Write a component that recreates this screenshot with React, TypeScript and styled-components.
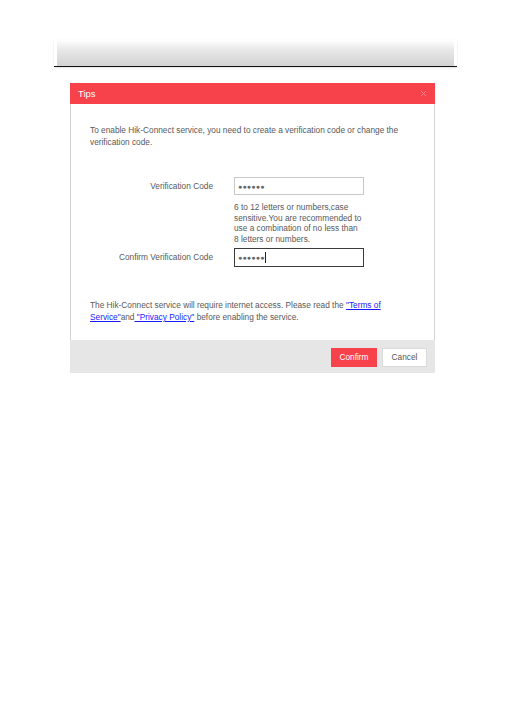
import styled, { createGlobalStyle } from "styled-components";
import { X } from "lucide-react";

const GlobalStyle = createGlobalStyle`
  body {
    margin: 0;
    background: #fff;
    font-family: "Liberation Sans", Arial, sans-serif;
  }
`;

const Page = styled.div`
  width: 511px;
  min-height: 721px;
  padding-top: 40px;
  box-sizing: border-box;
`;

const HeaderRule = styled.div`
  margin-left: 54px;
  width: 403px;
  border-bottom: 1px solid #111;
  box-shadow: 0 1px 2px rgba(0, 0, 0, 0.12);
`;

const HeaderBand = styled.div`
  margin: 0 3px;
  height: 26px;
  background: linear-gradient(#ffffff, #e9e9e9 35%, #d2d2d2);
`;

const Dialog = styled.div`
  margin: 16px 0 0 70px;
  width: 365px;
`;

const TitleBar = styled.div`
  height: 21px;
  background: #f7414b;
  display: flex;
  align-items: center;
  justify-content: space-between;
  padding: 0 7px 0 8px;
  color: #fff;
  font-size: 9.5px;
`;

const Close = styled.span`
  display: flex;
  color: #fbb3b7;
`;

const Body = styled.div`
  border-left: 1px solid #d4d4d4;
  border-right: 1px solid #d4d4d4;
  padding: 20px 19px 17px 19px;
  color: #585858;
  font-size: 8.3px;
  line-height: 12px;
`;

const Intro = styled.p`
  margin: 0;
`;

const Form = styled.div`
  margin-top: 29px;
  display: flex;
  flex-direction: column;
  gap: 3px;
`;

const Row = styled.div`
  display: flex;
  gap: 21px;
  align-items: flex-start;
`;

const Label = styled.div`
  width: 123px;
  text-align: right;
  line-height: 18px;
`;

const FieldCol = styled.div`
  width: 130px;
`;

const Field = styled.div<{ $focused?: boolean }>`
  height: ${(p) => (p.$focused ? 19 : 18)}px;
  box-sizing: border-box;
  border: 1px solid ${(p) => (p.$focused ? "#3a3a3a" : "#c9c9c9")};
  display: flex;
  align-items: center;
  padding-left: 3px;
  background: #fff;
`;

const Dots = styled.span`
  font-size: 7px;
  letter-spacing: 0.2px;
  color: #666;
  line-height: 1;
`;

const Caret = styled.span`
  width: 1px;
  height: 11px;
  background: #222;
`;

const Hint = styled.div`
  margin-top: 7px;
  line-height: 10.7px;
`;

const Notice = styled.p`
  margin: 32px 0 0;
`;

const Link = styled.a`
  color: #1a1aff;
  text-decoration: underline;
`;

const Footer = styled.div`
  height: 33px;
  background: #e6e6e6;
  display: flex;
  justify-content: flex-end;
  align-items: flex-start;
  gap: 5px;
  padding: 8px 8px 0 0;
  box-sizing: border-box;
`;

const Button = styled.button<{ $primary?: boolean }>`
  width: ${(p) => (p.$primary ? 46 : 45)}px;
  height: 19px;
  padding: 0;
  font-family: inherit;
  font-size: 8.3px;
  border: 1px solid ${(p) => (p.$primary ? "#f7414b" : "#dadada")};
  background: ${(p) => (p.$primary ? "#f7414b" : "#fff")};
  color: ${(p) => (p.$primary ? "#fff" : "#555")};
`;

export default function App() {
  return (
    <Page>
      <GlobalStyle />
      <HeaderRule>
        <HeaderBand />
      </HeaderRule>
      <Dialog>
        <TitleBar>
          <span>Tips</span>
          <Close>
            <X size={9} strokeWidth={1.5} />
          </Close>
        </TitleBar>
        <Body>
          <Intro>
            To enable Hik-Connect service, you need to create a verification code or change the
            verification code.
          </Intro>
          <Form>
            <Row>
              <Label>Verification Code</Label>
              <FieldCol>
                <Field>
                  <Dots>●●●●●●</Dots>
                </Field>
                <Hint>
                  6 to 12 letters or numbers,case sensitive.You are recommended to use a
                  combination of no less than 8 letters or numbers.
                </Hint>
              </FieldCol>
            </Row>
            <Row>
              <Label>Confirm Verification Code</Label>
              <FieldCol>
                <Field $focused>
                  <Dots>●●●●●●</Dots>
                  <Caret />
                </Field>
              </FieldCol>
            </Row>
          </Form>
          <Notice>
            The Hik-Connect service will require internet access. Please read the{" "}
            <Link href="#">"Terms of Service"</Link>and<Link href="#"> "Privacy Policy"</Link>{" "}
            before enabling the service.
          </Notice>
        </Body>
        <Footer>
          <Button $primary>Confirm</Button>
          <Button>Cancel</Button>
        </Footer>
      </Dialog>
    </Page>
  );
}
